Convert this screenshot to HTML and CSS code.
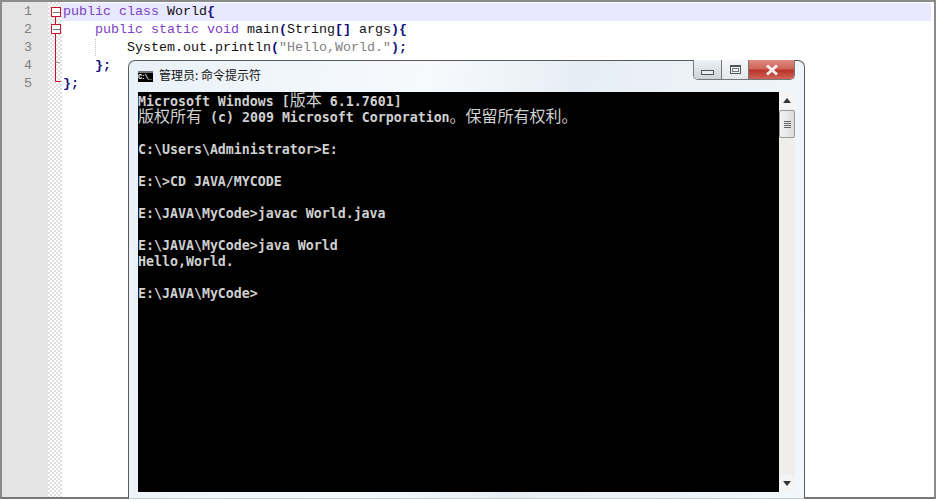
FILE: index.html
```html
<!DOCTYPE html>
<html lang="zh-CN">
<head>
<meta charset="utf-8">
<title>World.java</title>
<link rel="stylesheet" href="styles.css">
</head>
<body>
<div class="screen">
  <div class="editor">
    <div class="gutter">
      <div class="num">1</div>
      <div class="num">2</div>
      <div class="num">3</div>
      <div class="num">4</div>
      <div class="num">5</div>
    </div>
    <div class="fold">
      <svg class="fold-svg" width="14" height="90" viewBox="0 0 14 90">
        <path d="M7.5 14V79.5H13" fill="none" stroke="#c8102e"/>
        <path d="M7.5 60.5H12" fill="none" stroke="#999"/>
        <rect x="3.5" y="5.5" width="9" height="9" fill="#fff" stroke="#c8102e"/>
        <path d="M5 10.5H12" stroke="#777"/>
        <rect x="3.5" y="22.5" width="9" height="9" fill="#fff" stroke="#c8102e"/>
        <path d="M5 27.5H12" stroke="#777"/>
      </svg>
    </div>
    <div class="code">
      <div class="line current"><span class="kw">public class</span> World<span class="op">{</span></div>
      <div class="line indent1"><span class="kw">public static void</span> main<span class="op">(</span>String<span class="op">[]</span> args<span class="op">){</span></div>
      <div class="line indent2">System<span class="op">.</span>out<span class="op">.</span>println<span class="op">(</span><span class="str">"Hello,World."</span><span class="op">);</span></div>
      <div class="line indent1"><span class="op">};</span></div>
      <div class="line"><span class="op">};</span></div>
    </div>
  </div>

  <section class="window">
    <header class="titlebar">
      <span class="cmd-icon">C:\_</span>
      <span class="title">管理员: 命令提示符</span>
      <div class="controls">
        <div class="ctl ctl-min"><span class="glyph-min"></span></div>
        <div class="ctl ctl-max"><span class="glyph-max"></span></div>
        <div class="ctl ctl-close">
          <svg width="16" height="12" viewBox="0 0 16 12"><path d="M3 1.5L13 10.5M13 1.5L3 10.5" stroke="#f4f0ee" stroke-width="3"/></svg>
        </div>
      </div>
    </header>
    <div class="client">
      <pre class="console"><span class="row">Microsoft Windows [<span class="cjk">版本</span> 6.1.7601]</span>
<span class="row"><span class="cjk">版权所有</span> (c) 2009 Microsoft Corporation<span class="cjk">。保留所有权利。</span></span>
<span class="row"> </span>
<span class="row">C:\Users\Administrator&gt;E:</span>
<span class="row"> </span>
<span class="row">E:\&gt;CD JAVA/MYCODE</span>
<span class="row"> </span>
<span class="row">E:\JAVA\MyCode&gt;javac World.java</span>
<span class="row"> </span>
<span class="row">E:\JAVA\MyCode&gt;java World</span>
<span class="row">Hello,World.</span>
<span class="row"> </span>
<span class="row">E:\JAVA\MyCode&gt;</span></pre>
      <div class="scrollbar">
        <div class="arrow"><svg width="8" height="5" viewBox="0 0 8 5"><path d="M4 0L8 5H0Z" fill="#333"/></svg></div>
        <div class="thumb"><span></span><span></span><span></span><span></span></div>
        <div class="track"></div>
        <div class="arrow"><svg width="8" height="5" viewBox="0 0 8 5"><path d="M4 5L8 0H0Z" fill="#333"/></svg></div>
      </div>
    </div>
  </section>
</div>
</body>
</html>
```
FILE: styles.css
```css
html, body {
  margin: 0;
  padding: 0;
  height: 100%;
  overflow: hidden;
  background: #fff;
}
.screen {
  position: relative;
  width: 936px;
  height: 501px;
  overflow: hidden;
  background: #fff;
}
.editor {
  box-sizing: border-box;
  display: flex;
  width: 936px;
  height: 499px;
  border: 2px solid #8b8b8b;
  border-bottom-color: #777;
  background: #fff;
}
.gutter {
  box-sizing: border-box;
  width: 46px;
  padding-top: 1px;
  background: #e4e4e4;
  font: 13.33px/18px "Liberation Mono", monospace;
  color: #808080;
}
.num {
  height: 18px;
  padding-right: 16px;
  text-align: right;
}
.fold {
  width: 14px;
  flex: none;
  background-color: #fff;
  background-image: conic-gradient(#dedede 25%, #fff 0 50%, #dedede 0 75%, #fff 0);
  background-size: 4px 4px;
}
.fold-svg {
  display: block;
}
.code {
  flex: 1;
  padding: 1px 3px 0 0;
  font: 13.33px/18px "Liberation Mono", monospace;
  color: #111;
}
.line {
  height: 18px;
  padding-left: 1px;
  white-space: pre;
}
.current {
  background: #e8e8ff;
}
.indent1 {
  padding-left: 33px;
}
.indent2 {
  padding-left: 65px;
  background-image: linear-gradient(#c4c4c4 50%, transparent 0);
  background-size: 1px 2px;
  background-position: 33px 0;
  background-repeat: repeat-y;
}
.kw {
  color: #7d3fc4;
}
.op {
  color: #101080;
  font-weight: 700;
}
.str {
  color: #808080;
}

.window {
  position: absolute;
  left: 128px;
  top: 60px;
  box-sizing: border-box;
  width: 677px;
  height: 439px;
  display: flex;
  flex-direction: column;
  padding: 0 9px 6px;
  border: 1px solid #5a5a5a;
  border-bottom-color: #c8ced4;
  border-radius: 7px 7px 0 0;
  background: linear-gradient(100deg, #e9f1f8 0%, #f7fafd 40%, #e6eef5 60%, #f3f7fb 100%);
}
.titlebar {
  display: flex;
  align-items: flex-start;
  height: 31px;
  flex: none;
}
.cmd-icon {
  box-sizing: border-box;
  width: 15px;
  height: 11px;
  margin-top: 10px;
  border-top: 2px solid #777;
  background: #000;
  color: #fff;
  font: 700 7px/9px "Liberation Mono", monospace;
  letter-spacing: -1px;
  overflow: hidden;
}
.title {
  margin: 5px 0 0 6px;
  font: 12px/17px "Noto Sans CJK SC", "Noto Sans", sans-serif;
  color: #111;
}
.controls {
  display: flex;
  height: 19px;
  margin-left: auto;
  margin-top: -1px;
  border: 1px solid #777;
  border-top: 0;
  border-radius: 0 0 5px 5px;
  overflow: hidden;
}
.ctl {
  display: flex;
  align-items: center;
  justify-content: center;
  height: 19px;
}
.ctl-min {
  width: 27px;
  border-right: 1px solid #777;
  background: linear-gradient(#eef2f6, #ccd3da);
}
.ctl-max {
  width: 26px;
  border-right: 1px solid #777;
  background: linear-gradient(#f4f6f9, #e3e8ed);
}
.ctl-close {
  width: 45px;
  background: linear-gradient(#e08b80 0%, #d0655a 45%, #b8342a 55%, #d06458 100%);
}
.glyph-min {
  width: 11px;
  height: 3px;
  margin-top: 6px;
  border: 1px solid #555;
  background: #e8eef4;
}
.glyph-max {
  box-sizing: border-box;
  width: 11px;
  height: 9px;
  border: 1px solid #555;
  border-top-width: 2px;
  background: #eef2f6;
  box-shadow: inset 0 0 0 1px #eef2f6, inset 0 0 0 2px #777;
}
.client {
  flex: 1;
  display: flex;
  min-height: 0;
}
.console {
  flex: 1;
  margin: 0;
  padding-top: 2px;
  background: #000;
  color: #d0d0d0;
  font: 700 13.28px/16px "DejaVu Sans Mono", "Liberation Mono", monospace;
  white-space: normal;
  overflow: hidden;
}
.row {
  display: block;
  height: 16px;
  white-space: pre;
}
.cjk {
  font: 400 16px/0 "Noto Sans CJK SC", sans-serif;
  color: #cfcfcf;
}
.scrollbar {
  width: 16px;
  flex: none;
  display: flex;
  flex-direction: column;
  background: #f0eeeb;
}
.arrow {
  display: flex;
  align-items: center;
  justify-content: center;
  height: 17px;
  flex: none;
  background: #f4f4f4;
}
.thumb {
  box-sizing: border-box;
  height: 28px;
  margin-top: 1px;
  flex: none;
  display: flex;
  flex-direction: column;
  align-items: center;
  justify-content: center;
  gap: 1px;
  border: 1px solid #9a9a9a;
  border-radius: 2px;
  background: linear-gradient(90deg, #f2f2f2, #dcdcdc);
}
.thumb span {
  width: 7px;
  height: 1px;
  background: #666;
}
.track {
  flex: 1;
}
```
